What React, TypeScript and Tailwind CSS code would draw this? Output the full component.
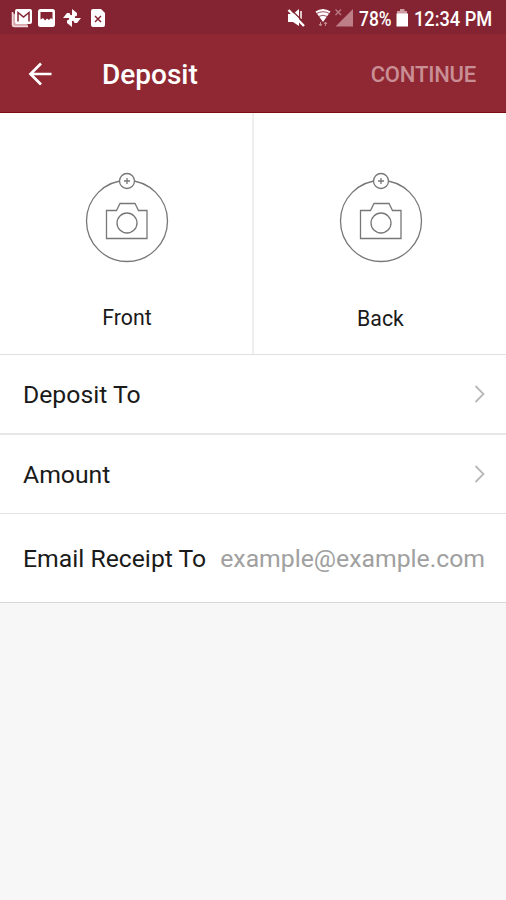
import type { ReactNode } from 'react';

const NotificationIcons = () => (
  <svg width="96" height="20" viewBox="0 0 96 20" fill="none">
    {/* mail */}
    <path d="M1 4v13q0 2 2 2h14v-2" fill="#d9a9ae" />
    <path d="M1.500 4v12.500q0 2 2 2H17" stroke="#f0dadd" strokeWidth="1.500" />
    <rect x="4" y="1" width="17" height="15" rx="2" fill="#fff" />
    <path d="M7 13.500V4.500l5.500 4.500L18 4.500v9" stroke="#842432" strokeWidth="1.500" />
    {/* gallery */}
    <rect x="27" y="1" width="17" height="18" rx="2.500" fill="#fff" />
    <path d="M29.500 4h12v7.500l-1.500-1.500-2 2-2-1.500-2 2-2-2.500-2.500 1.500z" fill="#842432" />
    {/* pinwheel */}
    <g fill="#fff">
      <path d="M61 10V1l5 4v2.500z" />
      <path d="M61 10h9l-4 5h-2.500z" />
      <path d="M61 10v9l-5-4v-2.500z" />
      <path d="M61 10h-9l4-5h2.500z" />
      <circle cx="61" cy="10" r="3" />
    </g>
    {/* file */}
    <path d="M82 1h8l4 4v12q0 2-2 2H82q-2 0-2-2V3q0-2 2-2z" fill="#fff" />
    <path d="M84 8l6 6m0-6l-6 6" stroke="#842432" strokeWidth="1.500" />
  </svg>
);

const SignalIcons = () => (
  <svg width="68" height="20" viewBox="0 0 68 20" fill="none">
    {/* muted speaker */}
    <path d="M1 6h5l6-5v17l-6-4H1z" fill="#fff" />
    <path d="M14 3v8" stroke="#fff" strokeWidth="1.500" />
    <path d="M3 .5l15 15" stroke="#842432" strokeWidth="1.200" />
    <path d="M1.500 2l15.500 16" stroke="#fff" strokeWidth="2.500" />
    {/* wifi */}
    <path d="M28.500 3.500q7.500-5 15 0L36 14z" fill="#fff" />
    <path d="M29.500 5.500q6.500-3.500 13 0M31.500 8.500q4.500-2.500 9 0" stroke="#842432" strokeWidth=".8" />
    <path d="M33.500 14v4m-1.500-2l1.500 2 1.500-2M38.500 18v-4m-1.500 2l1.500-2 1.500 2" stroke="#c48b93" />
    {/* signal */}
    <path d="M66 1v17.500H48.500z" fill="#bd7e87" />
    <path d="M48.500 1.500l5.500 5.500m0-5.500L48.500 7" stroke="#bd7e87" strokeWidth="1.300" />
  </svg>
);

const StatusBar = () => (
  <div className="h-[34px] bg-[#842432] pl-[11px] pr-[13px] pt-0.5 flex items-center justify-between text-white">
    <NotificationIcons />
    <div className="flex items-center">
      <SignalIcons />
      <span className="w-[34px] ml-1 pt-0.5 text-[20px] leading-5 whitespace-nowrap font-medium origin-left scale-x-[0.87]">78%</span>
      <svg className="ml-[3px]" width="13" height="20" viewBox="0 0 13 20">
        <path d="M4 1h4.500v2H11v3H1V3h3z" fill="#ce9da3" />
        <path d="M.5 5.500h11.500V18.500H.5z" fill="#fff" />
      </svg>
      <span className="w-[79px] ml-[5px] pt-0.5 text-[20px] leading-5 font-medium whitespace-nowrap origin-left scale-x-[0.91]">12:34 PM</span>
    </div>
  </div>
);

const AppBar = () => (
  <header className="h-[79px] bg-[#902834] border-b border-[#7c0c12] pl-7 pr-[30px] flex items-center text-white">
    <svg className="mt-0.5" width="24" height="24" viewBox="0 0 24 24" fill="none" stroke="#fff" strokeWidth="2.700">
      <path d="M23.500 12H2.500M13 1.500L2.500 12 13 22.500" />
    </svg>
    <h1 className="ml-[50px] text-[28px] font-medium pt-[3px]">Deposit</h1>
    <button className="ml-auto text-[22px] tracking-[-0.2px] font-medium text-[#c98f95] pt-[3px]">CONTINUE</button>
  </header>
);

const CameraIcon = () => (
  <svg width="85" height="92" viewBox="-1 0 85 92" fill="none" stroke="#777" strokeWidth="1.300">
    <circle cx="42" cy="49" r="40.500" />
    <path d="M21.500 38.500h10l3.500-7h15l3.500 7h8.500v28h-40.500z" />
    <circle cx="42" cy="51" r="10" />
    <circle cx="42" cy="9" r="7.500" fill="#fff" />
    <path d="M42 6v6m-3-3h6" />
  </svg>
);

const PhotoTile = ({ label, className, labelClass }: { label: string; className: string; labelClass: string }) => (
  <div className={`flex flex-col items-center pt-[59px] pl-px ${className}`}>
    <CameraIcon />
    <span className={`text-[21.3px] leading-8 ${labelClass}`}>{label}</span>
  </div>
);

const Row = ({ label, className, children }: { label: string; className: string; children: ReactNode }) => (
  <div className={`flex items-center justify-between pl-[23px] text-[24.75px] whitespace-nowrap ${className}`}>
    <span>{label}</span>
    {children}
  </div>
);

const Chevron = () => (
  <svg className="mb-0.5" width="12" height="18" viewBox="0 0 12 18" fill="none" stroke="#b8b8b8" strokeWidth="1.800">
    <path d="M1.500 1l8 8-8 8" />
  </svg>
);

const App = () => {
  return (
    <div className="min-h-screen bg-[#f7f7f7] font-['Roboto',sans-serif] text-[#1a1a1a]">
      <StatusBar />
      <AppBar />
      <main className="bg-white">
        <div className="grid grid-cols-[254px_1fr] h-[242px] border-b border-[#dfdfdf]">
          <PhotoTile label="Front" className="border-r-2 border-[#efefef]" labelClass="mt-[38px] pl-px" />
          <PhotoTile label="Back" className="" labelClass="mt-[39px]" />
        </div>
        <Row label="Deposit To" className="h-20 pt-px pr-5 border-b-2 border-[#e6e6e6]">
          <Chevron />
        </Row>
        <Row label="Amount" className="h-[79px] pt-0.5 pr-5 border-b border-[#e2e2e2]">
          <Chevron />
        </Row>
        <Row label="Email Receipt To" className="h-[89px] pt-0.5 pr-[21px] border-b border-[#d8d8d8]">
          <span className="text-[#a0a0a0]">example@example.com</span>
        </Row>
      </main>
    </div>
  );
};

export default App;
